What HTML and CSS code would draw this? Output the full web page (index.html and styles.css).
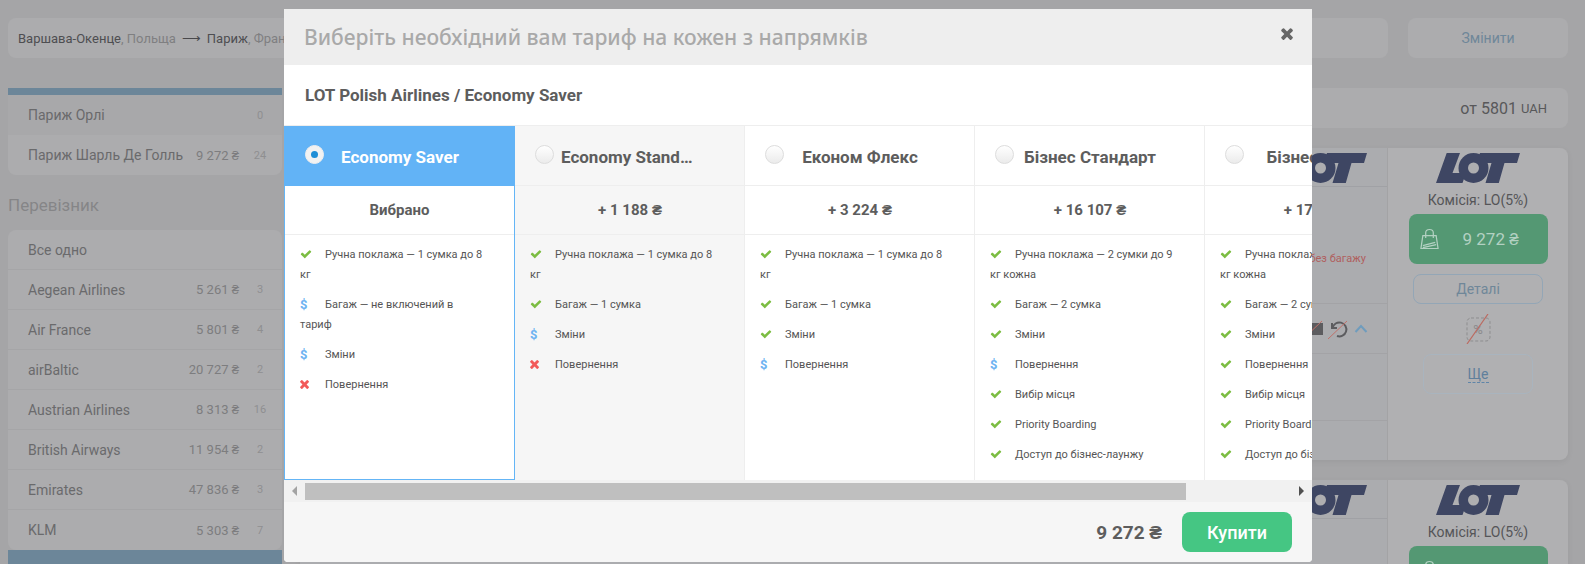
FILE: index.html
```html
<!DOCTYPE html>
<html lang="uk">
<head>
<meta charset="utf-8">
<title>Вибір тарифу</title>
<link rel="stylesheet" href="styles.css">
</head>
<body>
<svg class="defs" aria-hidden="true">
  <symbol id="i-check" viewBox="0 240 1792 1320"><path d="M1671 566q0 40-28 68l-724 724-136 136q-28 28-68 28t-68-28l-136-136-362-362q-28-28-28-68t28-68l136-136q28-28 68-28t68 28l294 295 656-657q28-28 68-28t68 28l136 136q28 28 28 68z"/></symbol>
  <symbol id="i-times" viewBox="100 240 1200 1320"><path d="M1298 1322q0 40-28 68l-136 136q-28 28-68 28t-68-28l-294-294-294 294q-28 28-68 28t-68-28l-136-136q-28-28-28-68t28-68l294-294-294-294q-28-28-28-68t28-68l136-136q28-28 68-28t68 28l294 294 294-294q28-28 68-28t68 28l136 136q28 28 28 68t-28 68l-294 294 294 294q28 28 28 68z"/></symbol>
  <symbol id="i-lot" viewBox="0 0 84 30">
    <path d="M10.7 0H24L16.5 20H30L26.500 30H0Z"/>
    <path d="M44 0H84L81 10H68.500L62.800 30H49.500L55.500 10H40Z"/>
    <circle cx="37.500" cy="15" r="15"/>
    <circle class="lot-hole" cx="37.500" cy="15" r="5.500"/>
  </symbol>
  <symbol id="i-bag" viewBox="0 0 20 22">
    <path d="M3 7.500H17L19 21H1Z M6 10V4.500C6 2.300 7.800 1 10 1S14 2.300 14 4.500V10 M3 18L16 14.500 M3 20L17 17" fill="none" stroke="currentColor" stroke-width="1.300"/>
  </symbol>
</svg>

<div class="page">
  <header class="topbar">
    <div class="route">
      <span class="city">Варшава-Окенце</span><span class="country">, Польща</span>
      <span class="route-arrow">⟶</span>
      <span class="city">Париж</span><span class="country">, Франція</span>
    </div>
    <button class="change">Змінити</button>
  </header>

  <div class="content">
    <aside class="filters">
      <div class="panel panel-accent">
        <div class="frow frow-dim"><span class="fname">Париж Орлі</span><span class="fprice"></span><span class="fcount">0</span></div>
        <div class="frow"><span class="fname">Париж Шарль Де Голль</span><span class="fprice">9 272 ₴</span><span class="fcount">24</span></div>
      </div>
      <h3 class="ftitle">Перевізник</h3>
      <div class="panel">
        <div class="frow"><span class="fname">Все одно</span></div>
        <div class="frow"><span class="fname">Aegean Airlines</span><span class="fprice">5 261 ₴</span><span class="fcount">3</span></div>
        <div class="frow"><span class="fname">Air France</span><span class="fprice">5 801 ₴</span><span class="fcount">4</span></div>
        <div class="frow"><span class="fname">airBaltic</span><span class="fprice">20 727 ₴</span><span class="fcount">2</span></div>
        <div class="frow"><span class="fname">Austrian Airlines</span><span class="fprice">8 313 ₴</span><span class="fcount">16</span></div>
        <div class="frow"><span class="fname">British Airways</span><span class="fprice">11 954 ₴</span><span class="fcount">2</span></div>
        <div class="frow"><span class="fname">Emirates</span><span class="fprice">47 836 ₴</span><span class="fcount">3</span></div>
        <div class="frow"><span class="fname">KLM</span><span class="fprice">5 303 ₴</span><span class="fcount">7</span></div>
      </div>
      <div class="panel-foot"></div>
    </aside>

    <main class="results">
      <div class="sortbar">от 5801 <small>UAH</small></div>

      <article class="card">
        <div class="card-main">
          <div class="card-head"><svg class="lot"><use href="#i-lot"/></svg></div>
          <div class="card-row card-row-bag"><span class="nobag">без багажу</span></div>
          <div class="card-row card-row-icons">
            <svg class="mini" viewBox="0 0 22 22"><rect x="4" y="5" width="18" height="12" fill="#5c5c5f"/><path d="M2 21L21 3" stroke="#c0716a" stroke-width="1"/></svg>
            <svg class="mini" viewBox="0 0 22 22"><path d="M5 5V10H10M5.500 10A7 7 0 1 1 10 18" fill="none" stroke="#5c5c5f" stroke-width="2"/><path d="M1 21L20 3" stroke="#c0716a" stroke-width="1"/></svg>
            <svg class="chev" viewBox="0 0 14 9"><path d="M1.500 8L7 2L12.500 8" fill="none" stroke="#6f9cbd" stroke-width="2"/></svg>
          </div>
          <div class="card-row card-row-a"></div>
          <div class="card-row card-row-b"></div>
        </div>
        <div class="card-side">
          <svg class="lot"><use href="#i-lot"/></svg>
          <div class="fee">Комісія: LO(5%)</div>
          <button class="pay"><svg class="bag"><use href="#i-bag"/></svg><span>9 272 ₴</span></button>
          <button class="details">Деталі</button>
          <svg class="nocomm" viewBox="0 0 30 30"><rect x="4" y="4" width="23" height="23" rx="4" fill="none" stroke="#8d8d8f" stroke-dasharray="3 2"/><text x="15" y="20" text-anchor="middle" class="pct">%</text><path d="M4 30L25 0" stroke="#bb6a60" stroke-width="1.200"/></svg>
          <div class="more"><span>Ще</span></div>
        </div>
      </article>

      <article class="card">
        <div class="card-main">
          <div class="card-head"><svg class="lot"><use href="#i-lot"/></svg></div>
        </div>
        <div class="card-side">
          <svg class="lot"><use href="#i-lot"/></svg>
          <div class="fee">Комісія: LO(5%)</div>
          <button class="pay"><svg class="bag"><use href="#i-bag"/></svg><span>9 272 ₴</span></button>
        </div>
      </article>
    </main>
  </div>
</div>

<section class="modal">
  <div class="modal-head">
    <h2 class="modal-title">Виберіть необхідний вам тариф на кожен з напрямків</h2>
    <svg class="close"><use href="#i-times"/></svg>
  </div>
  <div class="modal-sub">LOT Polish Airlines / Economy Saver</div>

  <div class="fares">
    <div class="fare fare-selected">
      <div class="fare-head"><span class="radio radio-on"></span><span class="fare-name">Economy Saver</span></div>
      <div class="fare-price">Вибрано</div>
      <ul class="perks">
        <li><span class="pi"><svg class="ok"><use href="#i-check"/></svg></span>Ручна поклажа — 1 сумка до 8 кг</li>
        <li><span class="pi pay-i">$</span>Багаж — не включений в тариф</li>
        <li><span class="pi pay-i">$</span>Зміни</li>
        <li><span class="pi"><svg class="no"><use href="#i-times"/></svg></span>Повернення</li>
      </ul>
    </div>
    <div class="fare fare-alt">
      <div class="fare-head"><span class="radio"></span><span class="fare-name">Economy Standard</span></div>
      <div class="fare-price">+ 1 188 ₴</div>
      <ul class="perks">
        <li><span class="pi"><svg class="ok"><use href="#i-check"/></svg></span>Ручна поклажа — 1 сумка до 8 кг</li>
        <li><span class="pi"><svg class="ok"><use href="#i-check"/></svg></span>Багаж — 1 сумка</li>
        <li><span class="pi pay-i">$</span>Зміни</li>
        <li><span class="pi"><svg class="no"><use href="#i-times"/></svg></span>Повернення</li>
      </ul>
    </div>
    <div class="fare">
      <div class="fare-head"><span class="radio"></span><span class="fare-name">Економ Флекс</span></div>
      <div class="fare-price">+ 3 224 ₴</div>
      <ul class="perks">
        <li><span class="pi"><svg class="ok"><use href="#i-check"/></svg></span>Ручна поклажа — 1 сумка до 8 кг</li>
        <li><span class="pi"><svg class="ok"><use href="#i-check"/></svg></span>Багаж — 1 сумка</li>
        <li><span class="pi"><svg class="ok"><use href="#i-check"/></svg></span>Зміни</li>
        <li><span class="pi pay-i">$</span>Повернення</li>
      </ul>
    </div>
    <div class="fare">
      <div class="fare-head"><span class="radio"></span><span class="fare-name">Бізнес Стандарт</span></div>
      <div class="fare-price">+ 16 107 ₴</div>
      <ul class="perks">
        <li><span class="pi"><svg class="ok"><use href="#i-check"/></svg></span>Ручна поклажа — 2 сумки до 9 кг кожна</li>
        <li><span class="pi"><svg class="ok"><use href="#i-check"/></svg></span>Багаж — 2 сумка</li>
        <li><span class="pi"><svg class="ok"><use href="#i-check"/></svg></span>Зміни</li>
        <li><span class="pi pay-i">$</span>Повернення</li>
        <li><span class="pi"><svg class="ok"><use href="#i-check"/></svg></span>Вибір місця</li>
        <li><span class="pi"><svg class="ok"><use href="#i-check"/></svg></span>Priority Boarding</li>
        <li><span class="pi"><svg class="ok"><use href="#i-check"/></svg></span>Доступ до бізнес-лаунжу</li>
      </ul>
    </div>
    <div class="fare">
      <div class="fare-head"><span class="radio"></span><span class="fare-name">Бізнес Флекс</span></div>
      <div class="fare-price">+ 17 300 ₴</div>
      <ul class="perks">
        <li><span class="pi"><svg class="ok"><use href="#i-check"/></svg></span>Ручна поклажа — 2 сумки до 9 кг кожна</li>
        <li><span class="pi"><svg class="ok"><use href="#i-check"/></svg></span>Багаж — 2 сумка</li>
        <li><span class="pi"><svg class="ok"><use href="#i-check"/></svg></span>Зміни</li>
        <li><span class="pi"><svg class="ok"><use href="#i-check"/></svg></span>Повернення</li>
        <li><span class="pi"><svg class="ok"><use href="#i-check"/></svg></span>Вибір місця</li>
        <li><span class="pi"><svg class="ok"><use href="#i-check"/></svg></span>Priority Boarding</li>
        <li><span class="pi"><svg class="ok"><use href="#i-check"/></svg></span>Доступ до бізнес-лаунжу</li>
      </ul>
    </div>
  </div>

  <div class="hscroll">
    <span class="arrow arrow-left"></span>
    <span class="thumb"></span>
    <span class="arrow arrow-right"></span>
  </div>

  <div class="modal-foot">
    <span class="total">9 272 ₴</span>
    <button class="buy">Купити</button>
  </div>
</section>
</body>
</html>
```

FILE: styles.css
```css
* { box-sizing: border-box; }
html, body { margin: 0; height: 564px; overflow: hidden; }
body {
  background: #a5a5a7;
  font-family: Roboto, "Liberation Sans", sans-serif;
  color: #555;
  position: relative;
}
.defs { width: 0; height: 0; position: absolute; }
button { font-family: inherit; cursor: pointer; }
h2, h3, ul { margin: 0; padding: 0; }
ul { list-style: none; }

/* page behind the dialog */
.page { padding: 18px 17px 0 8px; height: 564px; overflow: hidden; }
.topbar { display: flex; gap: 20px; height: 40px; }
.route {
  flex: 1;
  display: flex;
  align-items: center;
  padding-left: 10px;
  background: #acacae;
  border-radius: 8px;
  font-size: 13px;
  white-space: pre;
}
.city { color: #4e4e51; }
.country { color: #7f7f81; }
.route-arrow { color: #48484b; margin: 0 6px 0 6px; font-size: 13px; }
.change {
  width: 160px;
  border: 0;
  border-radius: 8px;
  background: #acacae;
  color: #6f8799;
  font-size: 14px;
}
.content { display: grid; grid-template-columns: 274px 1fr; column-gap: 18px; margin-top: 30px; }
.panel { background: #acacae; border-radius: 8px; overflow: hidden; }
.panel-accent { border-top: 7px solid #6c8699; border-radius: 0 0 8px 8px; }
.frow {
  display: flex;
  align-items: center;
  height: 40px;
  padding: 0 14px 0 20px;
  font-size: 14px;
  color: #6a6a6c;
  border-bottom: 1px solid #a5a5a7;
}
.frow:last-child { border-bottom: 0; }
.frow-dim { background: #a8a8aa; border-bottom: 0; }
.fname { flex: 1; white-space: nowrap; }
.fprice { font-size: 13px; color: #7d7d7f; white-space: nowrap; }
.fcount { width: 38px; padding-left: 4px; text-align: center; font-size: 11px; color: #8f8f91; margin-right: -9px; }
.ftitle { font-weight: 400; font-size: 17px; color: #858587; height: 55px; line-height: 60px; }
.panel-foot { height: 20px; background: #6c8699; }

.results { min-width: 0; }
.sortbar {
  height: 40px;
  background: #acacae;
  border-radius: 8px;
  display: flex;
  justify-content: flex-end;
  align-items: center;
  gap: 4px;
  padding-right: 21px;
  font-size: 16px;
  color: #58585a;
}
.sortbar small { font-size: 13px; }
.card {
  display: grid;
  grid-template-columns: 1fr 180px;
  height: 312px;
  margin-top: 20px;
  background: #b0b0b2;
  border-radius: 8px;
  box-shadow: 0 2px 6px rgba(0,0,0,.06);
  overflow: hidden;
}
.card-main { border-right: 1px solid #a3a3a5; background: #abacaf; }
.card-head { height: 39px; display: flex; justify-content: flex-end; padding: 5px 20px 0 0; border-bottom: 1px solid #a0a1a5; }
.lot { display: block; width: 84px; height: 30px; fill: #3e4663; flex: none; }
.lot-hole { fill: #aeaeb0; }
.card-row { border-bottom: 1px solid #a3a3a6; display: flex; justify-content: flex-end; }
.card-row-bag { height: 117px; padding: 64px 21px 0 0; }
.nobag { font-size: 11px; line-height: 16px; color: #b0605e; }
.card-row-icons { height: 50px; align-items: center; gap: 4px; padding-right: 19px; }
.mini { width: 22px; height: 22px; }
.chev { width: 14px; height: 9px; margin-left: 1px; }
.card-row-a { height: 67px; }
.card-row-b { border-bottom: 0; }
.card-side { display: flex; flex-direction: column; align-items: center; padding-top: 5px; }
.fee { font-size: 14px; line-height: 18px; margin-top: 8px; color: #555558; }
.pay {
  width: 139px;
  height: 50px;
  margin-top: 5px;
  border: 0;
  border-radius: 8px;
  background: #549873;
  color: #b3d1c2;
  font-size: 17px;
  display: flex;
  align-items: center;
  padding: 0 0 0 11px;
}
.bag { width: 19px; height: 22px; margin-right: 24px; color: #b3d1c2; }
.details {
  width: 130px;
  height: 30px;
  margin-top: 10px;
  background: transparent;
  border: 1px solid #93a6b6;
  border-radius: 8px;
  color: #6f8799;
  font-size: 14px;
}
.nocomm { width: 30px; height: 30px; margin-top: 10px; }
.pct { font-size: 13px; fill: #8a8a8c; }
.more {
  width: 110px;
  height: 40px;
  margin-top: 10px;
  border: 1px solid #a9b4be;
  border-radius: 8px;
  display: flex;
  align-items: center;
  justify-content: center;
  font-size: 14px;
  color: #5f7f9c;
}
.more span { border-bottom: 1px dashed #5f85a8; line-height: 16px; }

/* dialog */
.modal {
  position: absolute;
  left: 284px;
  top: 9px;
  width: 1028px;
  height: 553px;
  display: flex;
  flex-direction: column;
  background: #fff;
  border-radius: 0 0 4px 4px;
  overflow: hidden;
}
.modal-head {
  height: 56px;
  flex: none;
  background: #eee;
  display: flex;
  align-items: center;
  justify-content: space-between;
  padding: 0 19px 0 20px;
}
.modal-title {
  font-family: "Noto Sans", sans-serif;
  font-size: 21px;
  font-weight: 500;
  color: #a9a9a9;
  white-space: nowrap;
}
.close { width: 12px; height: 13px; fill: #666; margin-top: -8px; }
.modal-sub {
  height: 61px;
  flex: none;
  display: flex;
  align-items: center;
  padding-left: 21px;
  font-size: 17px;
  font-weight: 700;
  color: #5d5d5d;
  border-bottom: 1px solid #eee;
}
.fares { display: flex; height: 354px; flex: none; overflow: hidden; }
.fare { flex: 0 0 230px; border-right: 1px solid #eee; }
.fare-alt { background: #f6f6f6; }
.fare-selected { flex-basis: 231px; border: 1px solid #64b5f6; border-top: 0; }
.fare-head {
  height: 60px;
  display: grid;
  grid-template-columns: 46px 138px 46px;
  align-items: center;
  border-bottom: 1px solid #eee;
  margin-right: -1px;
}
.fare-selected .fare-head {
  background: #62b3f6;
  margin: 0 -1px;
  border-bottom: 0;
  grid-template-columns: 47px 138px 46px;
}
.radio {
  width: 19px;
  height: 19px;
  margin: -3px 0 0 20px;
  border-radius: 50%;
  border: 1px solid #ddd;
  background: linear-gradient(#fff, #ebebeb);
  display: flex;
  align-items: center;
  justify-content: center;
}
.radio-on { margin-left: 21px; border-color: #eee; background: #f2f2f2; }
.radio-on::after { content: ""; width: 7px; height: 7px; border-radius: 50%; background: #1f8ed6; }
.fare-name {
  margin-top: 2px;
  font-size: 17px;
  font-weight: 700;
  color: #5d5d5d;
  text-align: center;
  white-space: nowrap;
  overflow: hidden;
  text-overflow: ellipsis;
}
.fare-selected .fare-name { color: #fff; }
.fare-price {
  height: 49px;
  display: flex;
  align-items: center;
  justify-content: center;
  font-size: 15px;
  font-weight: 700;
  color: #5d5d5d;
  border-bottom: 1px solid #eee;
  margin-right: -1px;
}
.fare-selected .fare-price { margin: 0; }
.perks { padding: 10px 29px 0 15px; font-size: 11px; line-height: 20px; color: #555; }
.fare-selected .perks { padding-left: 15px; padding-right: 28px; }
.perks li { margin-bottom: 10px; }
.pi { display: inline-block; width: 25px; vertical-align: top; }
.pi svg { display: inline-block; vertical-align: -1px; }
.ok { width: 12px; height: 10px; fill: #7cbd42; }
.no { width: 9px; height: 10px; fill: #f25a5a; }
.pay-i { color: #6db3f2; font-size: 13px; font-weight: 700; }

.hscroll { height: 22px; flex: none; display: flex; align-items: center; background: #f1f1f1; }
.arrow { flex: none; width: 21px; height: 17px; display: flex; align-items: center; justify-content: center; }
.arrow::before { content: ""; border: 5px solid transparent; }
.arrow-left::before { border-right: 5px solid #a3a3a3; border-left: 0; }
.arrow-right::before { border-left: 5px solid #505050; border-right: 0; }
.thumb { flex: none; width: 881px; height: 17px; background: #bfbfbf; }
.arrow-right { margin-left: auto; }

.modal-foot {
  flex: 1;
  display: flex;
  align-items: center;
  justify-content: flex-end;
  gap: 20px;
  padding-right: 20px;
  background: #f6f6f6;
}
.total { font-size: 19px; font-weight: 700; color: #5d5d5d; }
.buy {
  width: 110px;
  height: 40px;
  border: 0;
  border-radius: 8px;
  background: #45c683;
  color: #fff;
  font-size: 18px;
  font-weight: 500;
}
```
